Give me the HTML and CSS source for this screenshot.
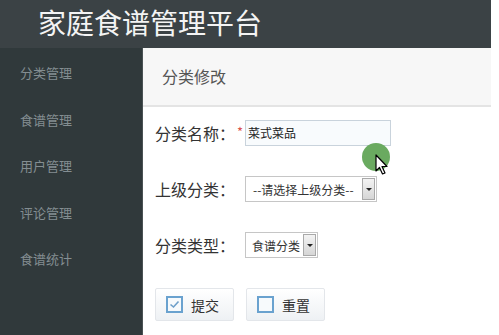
FILE: index.html
```html
<!DOCTYPE html>
<html lang="zh-CN">
<head>
    <meta charset="UTF-8">
    <title>家庭食谱管理平台</title>
    <link rel="stylesheet" href="styles.css">
</head>
<body>
<div class="page">
    <div class="top">家庭食谱管理平台</div>
    <div class="frame">
        <ul class="menu">
            <li>分类管理</li>
            <li>食谱管理</li>
            <li>用户管理</li>
            <li>评论管理</li>
            <li>食谱统计</li>
        </ul>
        <div class="main">
            <div class="panel-head">分类修改</div>
            <div class="form">
                <div class="row">
                    <span class="label">分类名称：</span><span class="star">*</span>
                    <div class="field wide">菜式菜品</div>
                </div>
                <div class="row">
                    <span class="label">上级分类：</span>
                    <div class="select sel-parent"><span class="opt">--请选择上级分类--</span><span class="arrow"></span></div>
                </div>
                <div class="row">
                    <span class="label">分类类型：</span>
                    <div class="select sel-type"><span class="opt">食谱分类</span><span class="arrow"></span></div>
                </div>
                <div class="buttons">
                    <button class="btn"><span class="box checked">
                        <svg width="11" height="9" viewBox="0 0 11 9"><path d="M1.5 4.5 L4.5 7 L9.5 1.5" fill="none" stroke="#6d9fc9" stroke-width="1.6"/></svg>
                    </span>提交</button>
                    <button class="btn"><span class="box"></span>重置</button>
                </div>
            </div>
            <div class="pointer">
                <svg width="14" height="22" viewBox="0 0 14 22"><path d="M1 1 L1 17 L4.5 13.5 L7.5 20 L10 19 L7 12.5 L12 12.5 Z" fill="#fff" stroke="#000" stroke-width="1.2" stroke-linejoin="round"/></svg>
            </div>
        </div>
    </div>
</div>
</body>
</html>
```

FILE: styles.css
```css
body { margin: 0; background-color: #ffffff; font-family: "Noto Sans CJK SC", "Liberation Sans", sans-serif; }
.page { width: 491px; height: 335px; display: flex; flex-direction: column; overflow: hidden; }
.top { height: 48px; flex: none; background-color: #3b4245; color: #f4f4f4; font-size: 28px; line-height: 44px; padding-left: 38px; }
.frame { flex: 1; display: flex; }
.menu { width: 142px; flex: none; margin: 0; padding: 2px 0 0 0; list-style: none; background-color: #30393b; }
.menu li { height: 46.5px; line-height: 46.5px; padding-left: 20px; font-size: 13px; color: #848e92; }
.main { flex: 1; position: relative; border-left: 1px solid #4a5254; background-color: #ffffff; }
.panel-head { height: 57px; line-height: 56px; background-color: #f7f7f7; border-bottom: 2px solid #e4e4e4; padding-left: 19px; font-size: 16px; color: #555555; }
.form { padding: 13px 0 0 12px; }
.row { height: 26px; margin-bottom: 30px; display: flex; align-items: center; }
.label { width: 82px; font-size: 16px; color: #333333; white-space: nowrap; }
.star { width: 8px; color: #d9534f; font-size: 13px; position: relative; top: -2px; }
.row .label + .select { margin-left: 8px; }
.field { line-height: 24px; border: 1px solid #c9d3dc; background-color: #f8fbfd; font-size: 12px; color: #222222; padding-left: 2px; box-sizing: border-box; height: 26px; }
.wide { width: 146px; }
.select { height: 26px; box-sizing: border-box; border: 1px solid #c6c6c6; background-color: #ffffff; display: flex; align-items: center; font-size: 12px; color: #333333; }
.select .opt { flex: 1; padding-left: 7px; white-space: nowrap; }
.sel-parent { width: 132px; }
.sel-type { width: 73px; }
.sel-type .opt { padding-left: 6px; }
.arrow { width: 13px; height: 22px; margin-right: 1px; border: 1px solid #a9a9a9; box-sizing: border-box; background: linear-gradient(#f3f3f3, #d6d6d6); position: relative; }
.arrow::after { content: ""; position: absolute; left: 3px; top: 9px; border-left: 3px solid transparent; border-right: 3px solid transparent; border-top: 3px solid #222222; }
.buttons { display: flex; gap: 12px; margin-top: 1px; }
.btn { width: 79px; height: 33px; border: 1px solid #e3e6ea; border-radius: 2px; background: linear-gradient(#ffffff, #eef1f4); display: flex; align-items: center; padding: 0 0 0 10px; font-family: inherit; font-size: 14px; color: #333333; }
.box { width: 17px; height: 17px; box-sizing: border-box; border: 2px solid #6aa2cf; margin-right: 8px; display: flex; align-items: center; justify-content: center; background-color: #f7fafc; }
.pointer { position: absolute; left: 219px; top: 95px; width: 28px; height: 28px; border-radius: 50%; background-color: #6aaa60; }
.pointer svg { position: absolute; left: 13px; top: 11px; }
```
